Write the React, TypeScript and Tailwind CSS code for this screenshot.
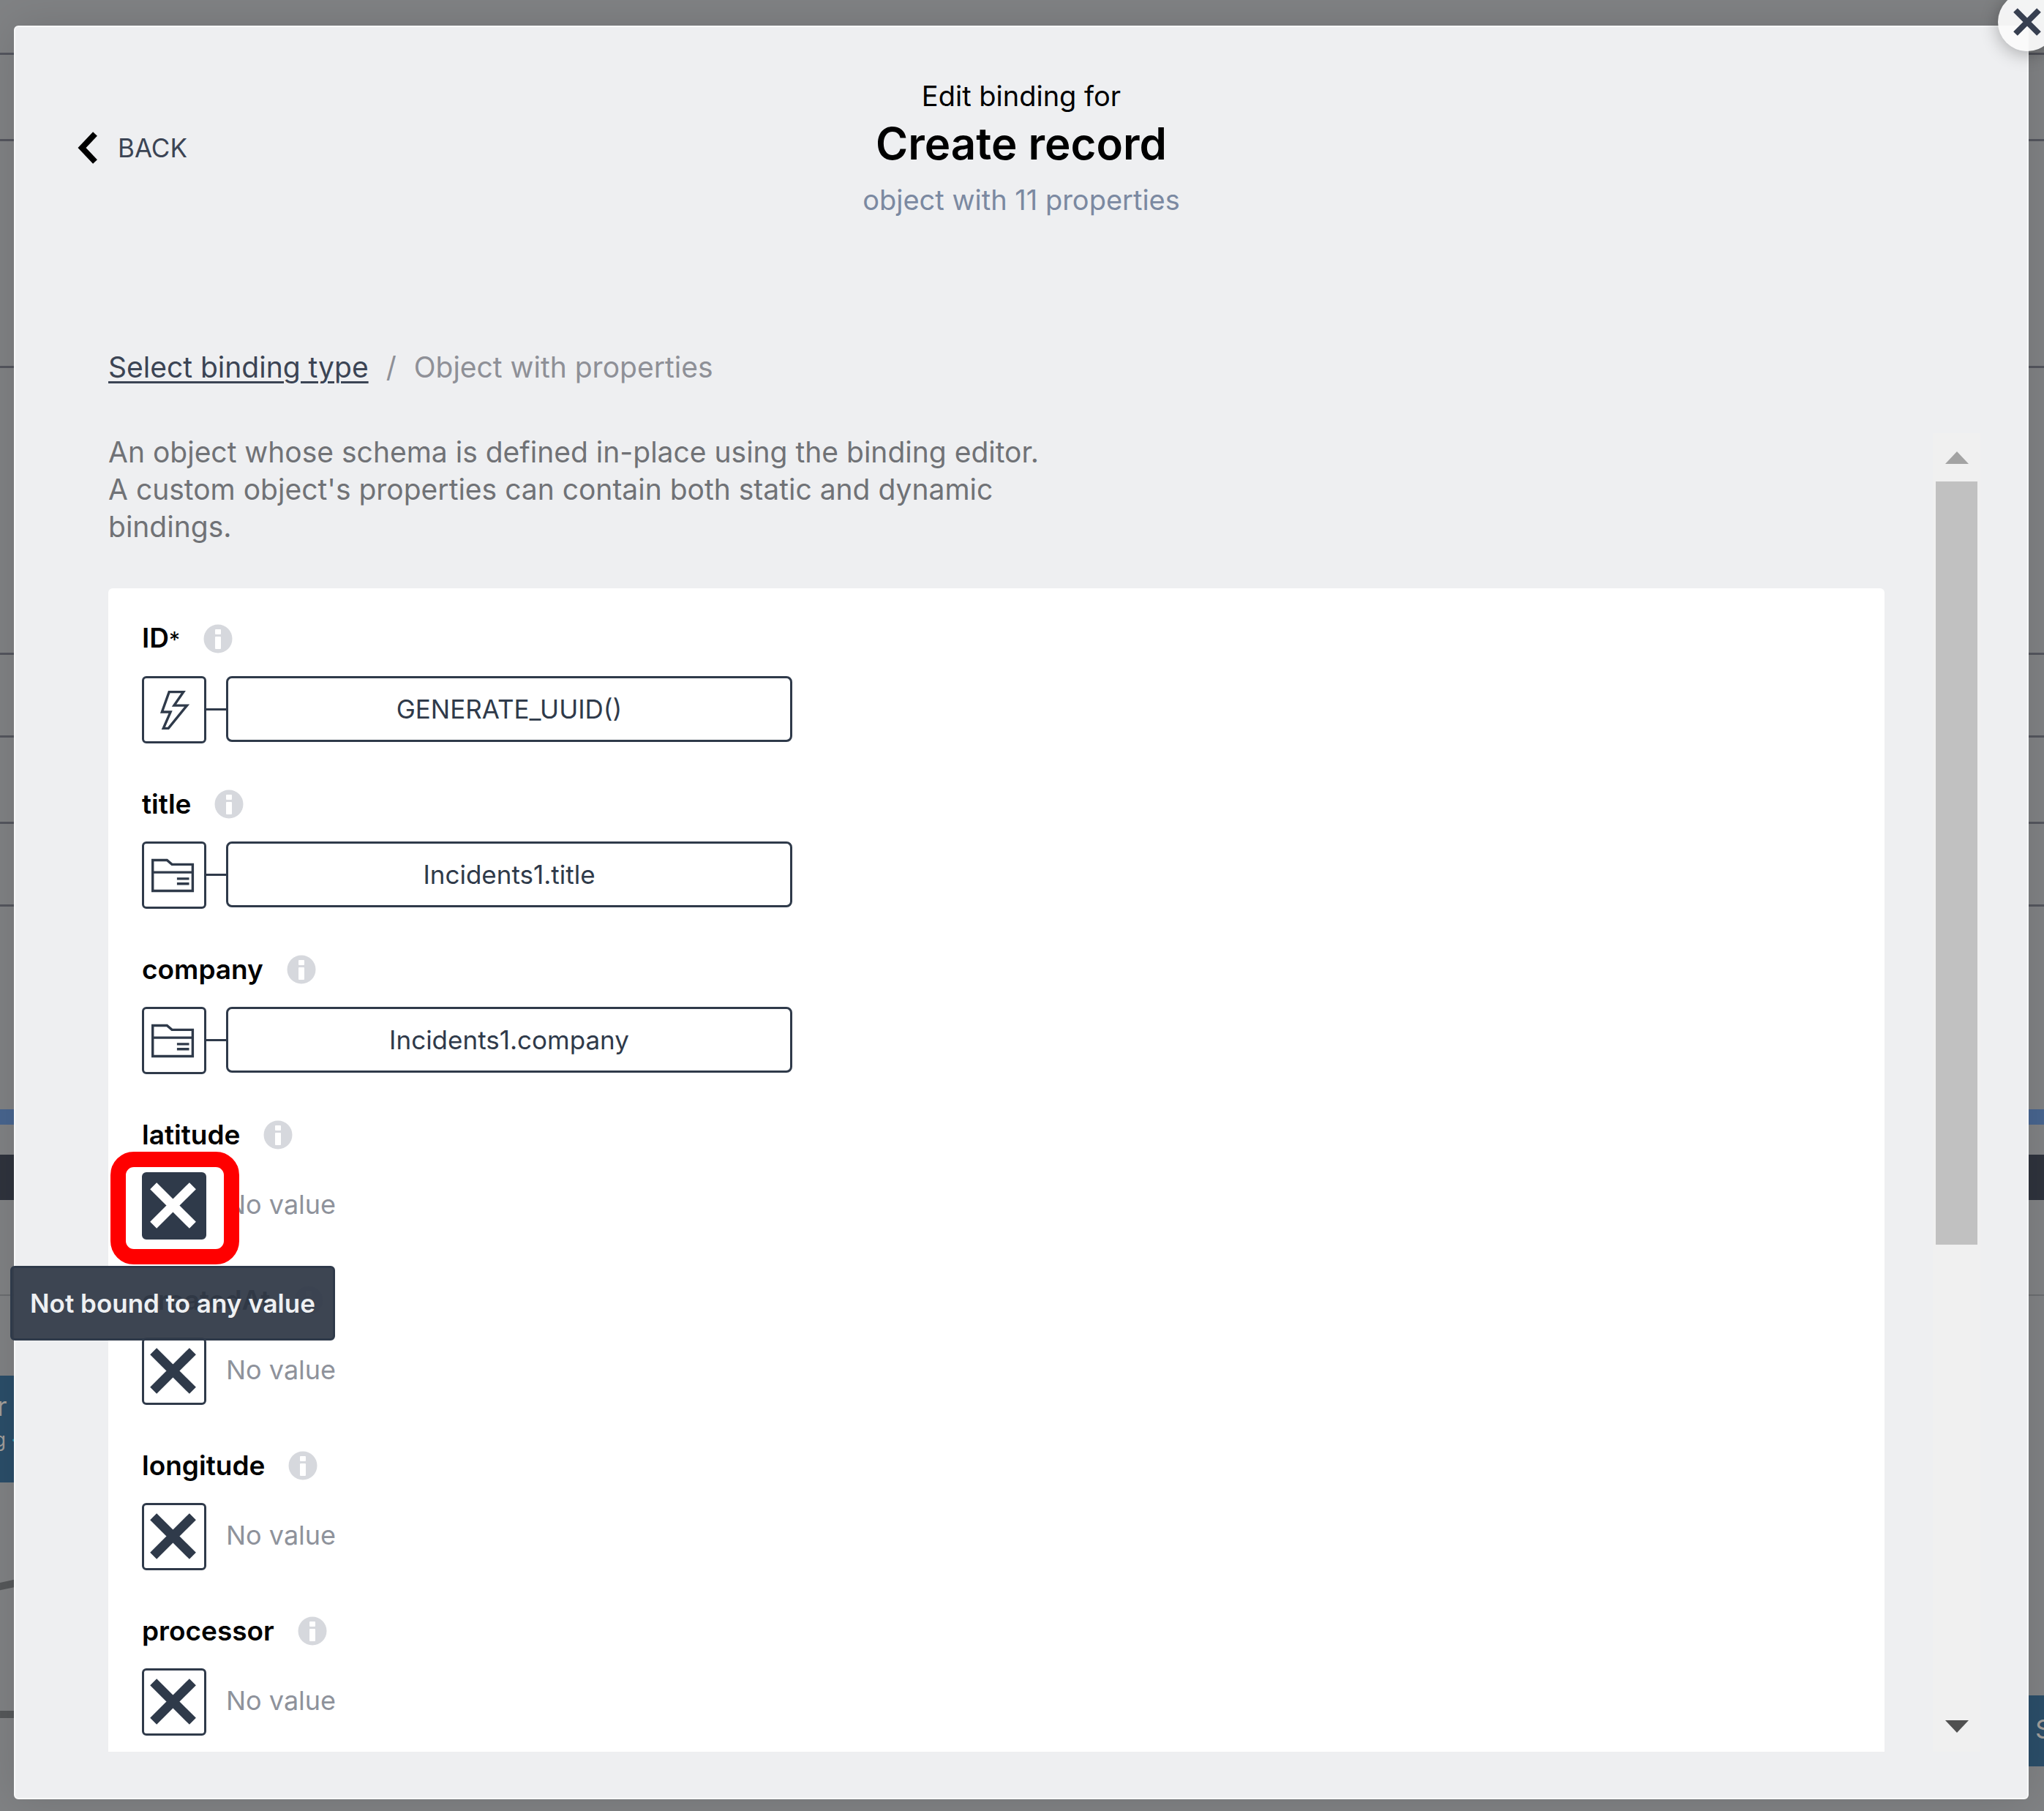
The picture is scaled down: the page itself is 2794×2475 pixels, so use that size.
import React from "react";

type Kind = "function" | "variable" | "none";
type Property = { name: string; required?: boolean; kind: Kind; value: string; active?: boolean };

const properties: Property[] = [
  { name: "ID", required: true, kind: "function", value: "GENERATE_UUID()" },
  { name: "title", kind: "variable", value: "Incidents1.title" },
  { name: "company", kind: "variable", value: "Incidents1.company" },
  { name: "latitude", kind: "none", value: "No value", active: true },
  { name: "createdAt", kind: "none", value: "No value" },
  { name: "longitude", kind: "none", value: "No value" },
  { name: "processor", kind: "none", value: "No value" },
];

function BoltIcon() {
  return (
    <svg viewBox="0 0 84 88" className="h-full w-full" fill="none" stroke="currentColor" strokeWidth="3.500" aria-hidden="true">
      <path d="M35 19 H55 L42 38 H60 L34 70 H27 L37 47 H25 Z" />
    </svg>
  );
}

function FolderIcon() {
  return (
    <svg viewBox="0 0 84 88" className="h-full w-full" fill="none" stroke="currentColor" strokeWidth="3.500" aria-hidden="true">
      <path d="M12 23 H32 L39 29 H68 V66 H12 Z M12 40 H68" />
      <path d="M46 49 H63 M46 56 H63" />
    </svg>
  );
}

function CrossIcon() {
  return (
    <svg viewBox="0 0 84 88" className="h-full w-full" fill="none" stroke="currentColor" strokeWidth="13" aria-hidden="true">
      <path d="M13 16 L68 71 M68 16 L13 71" />
    </svg>
  );
}

function InfoIcon() {
  return (
    <svg viewBox="0 0 40 40" className="size-10" aria-hidden="true">
      <circle cx="20" cy="20" r="19.500" fill="#d6d8dd" />
      <rect x="16" y="7" width="8" height="7" rx="1" fill="#fff" />
      <rect x="16" y="17" width="8" height="17" rx="1" fill="#fff" />
    </svg>
  );
}

function PropertyRow({ name, required, kind, value, active }: Property) {
  const bound = kind !== "none";
  return (
    <li>
      <div className="flex h-[52px] items-center gap-8">
        <span className="text-[37px] leading-[52px] font-semibold text-black">
          {name}
          {required && <span className="text-[30px] font-normal">*</span>}
        </span>
        <button type="button" aria-label={`About ${name}`}>
          <InfoIcon />
        </button>
      </div>
      <div className="mt-[25px] flex h-[92px]">
        <div className="relative h-[92px] w-[88px] shrink-0">
          <button
            type="button"
            aria-label={`Binding of ${name}`}
            className={
              active
                ? "block h-full w-full rounded-md border-[3px] border-[#2f3a4a] bg-[#2f3a4a] text-white"
                : "block h-full w-full rounded-md border-[3px] border-[#2f3a4a] bg-white text-[#2f3a4a]"
            }
          >
            {kind === "function" ? <BoltIcon /> : kind === "variable" ? <FolderIcon /> : <CrossIcon />}
          </button>
          {active && (
            <>
              <span className="pointer-events-none absolute -top-7 -left-[43px] z-10 h-[154px] w-[176px] rounded-[32px] border-[21px] border-[#ff0000]" />
              <span
                role="tooltip"
                className="absolute top-32 -left-[180px] z-10 rounded-md border-[3px] border-[#2f3a4a] bg-[#333b49]/95 px-6 py-6 text-[35px] leading-[48px] font-semibold whitespace-nowrap text-[#eef0f2]"
              >
                Not bound to any value
              </span>
            </>
          )}
        </div>
        {bound ? (
          <>
            <span className="mt-[44px] h-[3px] w-[27px] shrink-0 bg-[#2f3a4a]" />
            <button
              type="button"
              className="h-[90px] w-[774px] rounded-lg border-[3px] border-[#2f3a4a] bg-white text-center text-[35px] text-[#2f3a4a]"
            >
              {value}
            </button>
          </>
        ) : (
          <span className="pl-[27px] text-[36px] leading-[88px] text-[#8e929b]">{value}</span>
        )}
      </div>
    </li>
  );
}

const rules: { gap: string; line: string }[] = [
  { gap: "h-[72px]", line: "h-[3px] bg-[#54565e]" },
  { gap: "h-[115px]", line: "h-[3px] bg-[#54565e]" },
  { gap: "h-[307px]", line: "h-[3px] bg-[#54565e]" },
  { gap: "h-[389px]", line: "h-[3px] bg-[#54565e]" },
  { gap: "h-[110px]", line: "h-[3px] bg-[#54565e]" },
  { gap: "h-[115px]", line: "h-[3px] bg-[#54565e]" },
  { gap: "h-[110px]", line: "h-[3px] bg-[#54565e]" },
  { gap: "h-[277px]", line: "h-[21px] bg-[#48658f]" },
  { gap: "h-[41px]", line: "h-[62px] bg-[#2f333d]" },
  { gap: "h-[129px]", line: "h-[2px] bg-[#6b6d70]" },
];

function Canvas() {
  return (
    <div className="absolute inset-0 overflow-hidden bg-[#808284]" aria-hidden="true">
      {rules.map((r, i) => (
        <React.Fragment key={i}>
          <div className={r.gap} />
          <div className={r.line} />
        </React.Fragment>
      ))}
      <div className="absolute top-[1880px] left-0 h-[146px] w-10 bg-[#2b4e69] text-[#a39f9b]">
        <div className="-ml-1 pt-[14px] text-[36px] leading-[56px]">r</div>
        <div className="-ml-2 text-[26px] leading-9">g&nbsp;<span className="text-[#2f9aa8]">·</span></div>
      </div>
      <svg viewBox="0 0 40 220" className="absolute top-[2140px] left-0 h-[220px] w-10" fill="none" stroke="#56585a" strokeWidth="10">
        <path d="M-4 29 L24 23 M-4 203 H40" />
      </svg>
      <div className="absolute top-[2317px] right-0 h-[97px] w-10 bg-[#2b4e69] pl-7 text-[36px] leading-[92px] text-[#a39f9b]">S</div>
    </div>
  );
}

export default function App() {
  return (
    <div className="relative min-h-screen overflow-hidden pt-[35px] pr-[21px] pb-4 pl-[19px] font-['Inter','Liberation_Sans',sans-serif]">
      <Canvas />
      <main
        role="dialog"
        aria-label="Edit binding for Create record"
        className="relative rounded-md border-2 border-[#f8f9fa] bg-[#eeeff1] pb-[63px] shadow-[0_0_60px_rgba(0,0,0,0.12)]"
      >
        <button
          type="button"
          aria-label="Close"
          className="absolute -top-[47px] -right-10 flex size-20 items-center justify-center rounded-full bg-[#fafafa]/95 text-[#373f50] shadow-[0_4px_24px_rgba(0,0,0,0.3)]"
        >
          <svg viewBox="0 0 40 40" className="size-10" fill="none" stroke="currentColor" strokeWidth="8" aria-hidden="true">
            <path d="M4 4 L36 36 M36 4 L4 36" />
          </svg>
        </button>

        <header className="grid grid-cols-[1fr_auto_1fr] items-start pt-[66px]">
          <div className="pt-[73px] pl-[84px]">
            <button type="button" className="flex items-center gap-7 text-[35px] leading-[52px] text-[#3b4454]">
              <svg viewBox="0 0 28 44" className="h-11 w-7" fill="none" stroke="#000" strokeWidth="8" aria-hidden="true">
                <path d="M25 3 L7 22 L25 41" />
              </svg>
              BACK
            </button>
          </div>
          <div className="text-center">
            <p className="text-[38px] leading-[56px] text-black">Edit binding for</p>
            <h1 className="text-[60px] leading-[74px] font-semibold text-black">Create record</h1>
            <p className="text-[38px] leading-[80px] text-[#7b89a1]">object with 11 properties</p>
          </div>
        </header>

        <nav aria-label="Breadcrumb" className="mt-[159px] flex gap-6 pl-[127px] text-[39px] leading-[60px] text-[#8e9097]">
          <a href="#binding-type" className="text-[#3b4454] underline decoration-[3px] underline-offset-[5px]">
            Select binding type
          </a>
          <span>/</span>
          <span>Object with properties</span>
        </nav>

        <div className="mt-[60px] flex">
          <div className="min-w-0 flex-1 pr-[66px] pl-[127px]">
            <p className="max-w-[1300px] text-[39px] leading-[51px] text-[#707276]">
              An object whose schema is defined in-place using the binding editor. A custom object's properties can contain both static and
              dynamic bindings.
            </p>
            <ul className="mt-[59px] flex flex-col gap-[57px] rounded-t-md bg-white px-[46px] pt-[43px] pb-[22px]">
              {properties.map((p) => (
                <PropertyRow key={p.name} {...p} />
              ))}
            </ul>
          </div>
          <div className="mr-16 flex w-[65px] flex-col items-center bg-[#f0f0f0]">
            <button type="button" aria-label="Scroll up" className="flex h-[66px] items-center">
              <svg viewBox="0 0 32 18" className="h-[18px] w-8" fill="#a3a3a3" aria-hidden="true">
                <path d="M0 18 L16 1 L32 18 Z" />
              </svg>
            </button>
            <div className="h-[1043px] w-[57px] bg-[#c1c1c1]" />
            <button type="button" aria-label="Scroll down" className="mt-auto flex h-[68px] items-center">
              <svg viewBox="0 0 32 18" className="h-[18px] w-8" fill="#505050" aria-hidden="true">
                <path d="M0 0 L16 17 L32 0 Z" />
              </svg>
            </button>
          </div>
        </div>
      </main>
    </div>
  );
}
